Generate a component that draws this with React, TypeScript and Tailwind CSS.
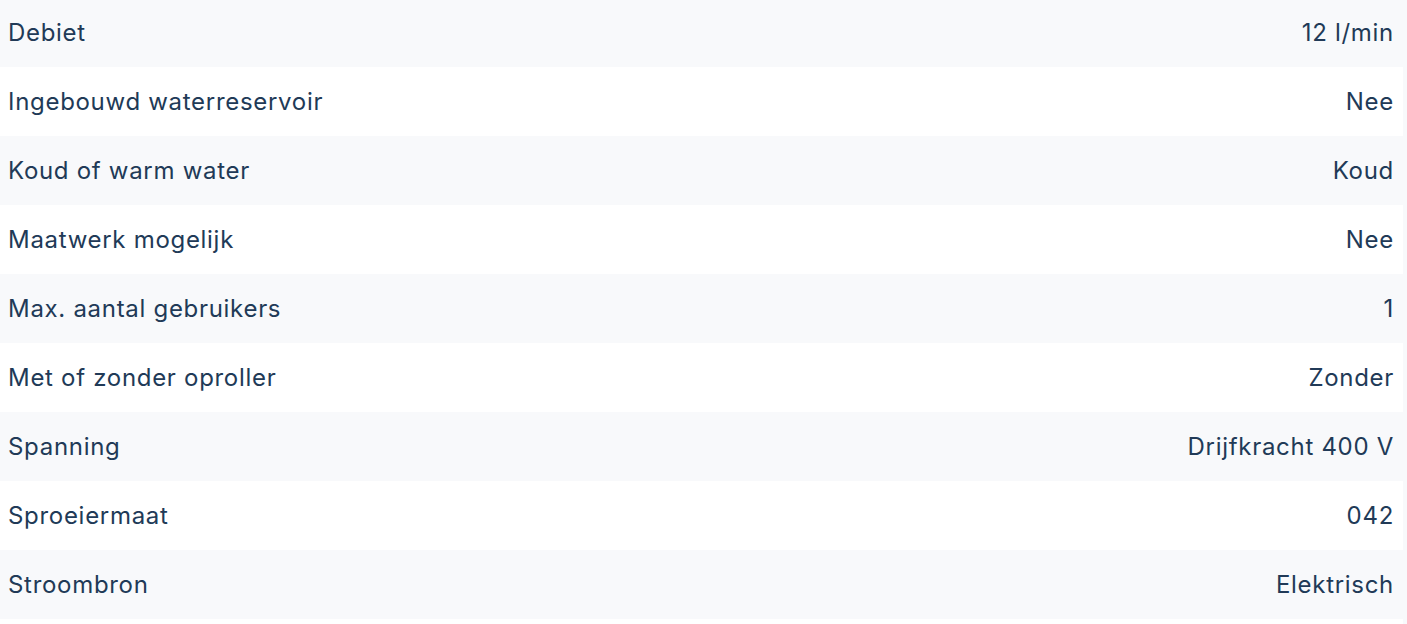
const rows: [string, string][] = [
  ["Debiet", "12 l/min"],
  ["Ingebouwd waterreservoir", "Nee"],
  ["Koud of warm water", "Koud"],
  ["Maatwerk mogelijk", "Nee"],
  ["Max. aantal gebruikers", "1"],
  ["Met of zonder oproller", "Zonder"],
  ["Spanning", "Drijfkracht 400 V"],
  ["Sproeiermaat", "042"],
  ["Stroombron", "Elektrisch"],
];

export default function App() {
  return (
    <div className="h-[624px] overflow-hidden bg-[#f8f9fb] font-['Inter',sans-serif] text-[#213a57]">
      <div className="-mt-[2px] w-[1403px]">
        {rows.map(([k, v], i) => (
          <div
            key={k}
            className={`flex h-[69px] items-center justify-between pl-[8px] pr-[9px] text-[24px] tracking-[0.7px] ${
              i % 2 === 0 ? "bg-[#f8f9fb]" : "bg-white"
            }`}
          >
            <span>{k}</span>
            <span>{v}</span>
          </div>
        ))}
        <div className="h-[69px] bg-white" />
      </div>
    </div>
  );
}
